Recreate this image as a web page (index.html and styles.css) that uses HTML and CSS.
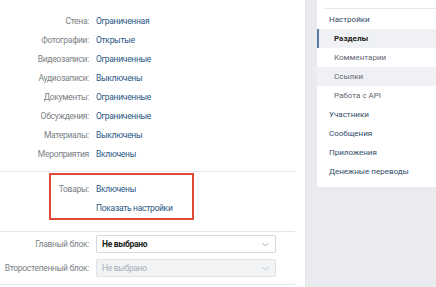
FILE: index.html
```html
<!DOCTYPE html>
<html lang="ru">
<head>
<meta charset="utf-8">
<link rel="stylesheet" href="styles.css">
</head>
<body>
<div class="page">
  <main class="card">
    <section class="sec sec-main">
      <div class="row"><span class="lbl">Стена:</span><span class="val">Ограниченная</span></div>
      <div class="row"><span class="lbl">Фотографии:</span><span class="val">Открытые</span></div>
      <div class="row"><span class="lbl">Видеозаписи:</span><span class="val">Ограниченные</span></div>
      <div class="row"><span class="lbl">Аудиозаписи:</span><span class="val">Выключены</span></div>
      <div class="row"><span class="lbl">Документы:</span><span class="val">Ограниченные</span></div>
      <div class="row"><span class="lbl">Обсуждения:</span><span class="val">Ограниченные</span></div>
      <div class="row"><span class="lbl">Материалы:</span><span class="val">Выключены</span></div>
      <div class="row"><span class="lbl">Мероприятия</span><span class="val">Включены</span></div>
    </section>
    <div class="divider"></div>
    <section class="highlight">
      <div class="row"><span class="lbl lbl-box">Товары:</span><span class="val">Включены</span></div>
      <div class="row"><span class="lbl lbl-box"></span><span class="val">Показать настройки</span></div>
    </section>
    <div class="divider divider-2"></div>
    <section class="selects">
      <div class="srow"><span class="lbl">Главный блок:</span>
        <div class="select"><span class="sel-text">Не выбрано</span>
          <svg class="chev" width="7" height="5" viewBox="0 0 7 5"><path d="M0.5 1 L3.5 4 L6.5 1" fill="none" stroke="#9aa7b6" stroke-width="1"/></svg>
        </div>
      </div>
      <div class="srow"><span class="lbl">Второстепенный блок:</span>
        <div class="select select-dis"><span class="sel-text">Не выбрано</span>
          <svg class="chev" width="7" height="5" viewBox="0 0 7 5"><path d="M0.5 1 L3.5 4 L6.5 1" fill="none" stroke="#b5bec9" stroke-width="1"/></svg>
        </div>
      </div>
    </section>
    <div class="divider divider-3"></div>
  </main>
  <aside class="side">
    <nav class="menu">
      <div class="menu-sep"></div>
      <div class="item">Настройки</div>
      <div class="item sub sel">Разделы</div>
      <div class="item sub">Комментарии</div>
      <div class="item sub hover">Ссылки</div>
      <div class="item sub">Работа с API</div>
      <div class="item">Участники</div>
      <div class="item">Сообщения</div>
      <div class="item">Приложения</div>
      <div class="item">Денежные переводы</div>
    </nav>
  </aside>
</div>
</body>
</html>
```

FILE: styles.css
```css
html, body {
  margin: 0;
  padding: 0;
  background: #e9ebee;
  font-family: Roboto, "Noto Sans", "DejaVu Sans", sans-serif;
  font-size: 8.5px;
}
.page {
  display: flex;
  width: 436px;
  height: 287px;
  overflow: hidden;
}
.card {
  width: 306px;
  flex: none;
  background: #fff;
  border-right: 1px solid #e1e4e8;
  box-sizing: border-box;
  letter-spacing: -0.3px;
}
.sec-main {
  padding-top: 11px;
  padding-bottom: 8px;
}
.row {
  display: flex;
  align-items: center;
  height: 19px;
  gap: 7px;
}
.lbl {
  width: 89px;
  flex: none;
  display: flex;
  justify-content: flex-end;
  white-space: nowrap;
  color: #7b7f85;
}
.lbl-box {
  width: 38px;
}
.val {
  color: #2a5885;
}
.divider {
  height: 1px;
  background: #e4e6ea;
  margin-right: 10px;
}
.highlight {
  margin: 1px 0 0 49px;
  width: 145px;
  box-sizing: border-box;
  border: 2px solid #de4a36;
  padding: 4px 0 1px 0;
}
.divider-2 {
  margin-top: 11px;
}
.selects {
  padding-top: 3px;
  display: flex;
  flex-direction: column;
  gap: 6px;
}
.srow {
  display: flex;
  align-items: center;
  gap: 7px;
  height: 18px;
}
.select {
  width: 180px;
  height: 18px;
  box-sizing: border-box;
  border: 1px solid #d3d9de;
  border-radius: 2px;
  background: #fff;
  display: flex;
  align-items: center;
  justify-content: space-between;
  padding: 0 6px 0 5px;
}
.sel-text {
  font-weight: 700;
  color: #222;
}
.select-dis {
  background: #f2f3f5;
  border-color: #dfe3e7;
}
.select-dis .sel-text {
  font-weight: 400;
  color: #a6b0bb;
}
.divider-3 {
  margin-top: 7px;
}
.side {
  flex: 1;
  padding-left: 11px;
}
.menu {
  background: #fff;
  height: 187px;
  box-sizing: border-box;
  padding-top: 3px;
  font-size: 8px;
}
.menu-sep {
  height: 1px;
  background: #e4e6ea;
  margin: 5px 0 0 8px;
}
.item {
  height: 19px;
  line-height: 19px;
  padding-left: 12px;
  color: #2f4a68;
  white-space: nowrap;
}
.menu-sep + .item {
  margin-top: 1px;
}
.sub {
  padding-left: 17px;
  color: #5f6670;
}
.sel {
  background: #eff1f4;
  border-left: 2px solid #577ca2;
  padding-left: 15px;
  font-weight: 700;
  color: #222;
}
.hover {
  background: #eff1f4;
}
```
